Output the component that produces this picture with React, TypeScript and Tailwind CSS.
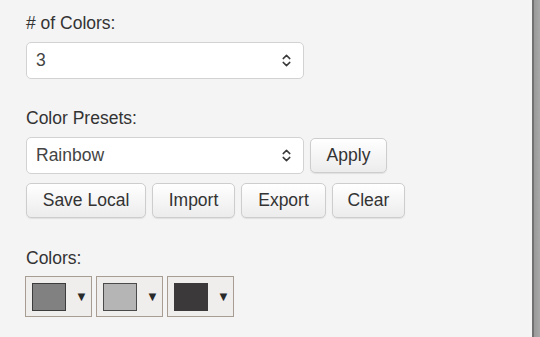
import React from "react";

function Chevrons() {
  return (
    <svg width="9" height="13" viewBox="0 0 9 13" fill="none" stroke="#3a3a3a" strokeWidth="1.5" strokeLinecap="round" strokeLinejoin="round">
      <path d="M1.2 4.6 L4.5 1.4 L7.8 4.6" />
      <path d="M1.2 8.4 L4.5 11.6 L7.8 8.4" />
    </svg>
  );
}

function Select({ value }: { value: string }) {
  return (
    <div className="flex h-[37px] w-[278px] items-center justify-between rounded-[5px] border border-[#d2d2d2] bg-white pl-[9px] pr-[12px] text-[17.5px] text-[#444]">
      <span>{value}</span>
      <Chevrons />
    </div>
  );
}

function Btn({ label, w }: { label: string; w: string }) {
  return (
    <button
      className={`flex h-[35px] items-center justify-center rounded-[5px] border border-[#cdcdcd] bg-gradient-to-b from-white to-[#ececec] text-[17.5px] text-[#333] shadow-[0_1px_1px_rgba(0,0,0,0.08)] ${w}`}
    >
      {label}
    </button>
  );
}

function Swatch({ fill, edge }: { fill: string; edge: string }) {
  return (
    <div className="flex h-[41px] w-[67px] items-center border border-[#a89d92] bg-[#efeeed] pl-[6px]">
      <div className={`h-[28px] w-[34px] border ${fill} ${edge}`} />
      <span className="ml-[9px] text-[13px] leading-none text-[#2a2a2a]">▼</span>
    </div>
  );
}

export default function App() {
  return (
    <div className="flex h-[337px] w-[540px] bg-[#f4f4f4] font-['Liberation_Sans',Arial,sans-serif] text-[#333]">
      <div className="flex-1 pl-[26px] pt-[13px]">
        {/* number of colours */}
        <div className="mb-[9px] text-[17.5px] leading-[20px]"># of Colors:</div>
        <Select value="3" />

        {/* presets */}
        <div className="mb-[9px] mt-[29px] text-[17.5px] leading-[20px]">Color Presets:</div>
        <div className="flex items-center gap-[6px]">
          <Select value="Rainbow" />
          <Btn label="Apply" w="w-[77px]" />
        </div>
        <div className="mt-[9px] flex gap-[6px]">
          <Btn label="Save Local" w="w-[120px]" />
          <Btn label="Import" w="w-[83px]" />
          <Btn label="Export" w="w-[85px]" />
          <Btn label="Clear" w="w-[73px]" />
        </div>

        {/* colours */}
        <div className="mb-[8px] mt-[30px] text-[17.5px] leading-[20px]">Colors:</div>
        <div className="-ml-px flex gap-[4px]">
          <Swatch fill="bg-[#818181]" edge="border-[#3c3c3c]" />
          <Swatch fill="bg-[#b5b5b5]" edge="border-[#4a4a4a]" />
          <Swatch fill="bg-[#3b3939]" edge="border-[#3b3939]" />
        </div>
      </div>
      <div className="w-[2px] bg-[#727272]" />
      <div className="w-[6px] bg-gradient-to-r from-[#9a9a9a] to-[#a8a8a8]" />
    </div>
  );
}
